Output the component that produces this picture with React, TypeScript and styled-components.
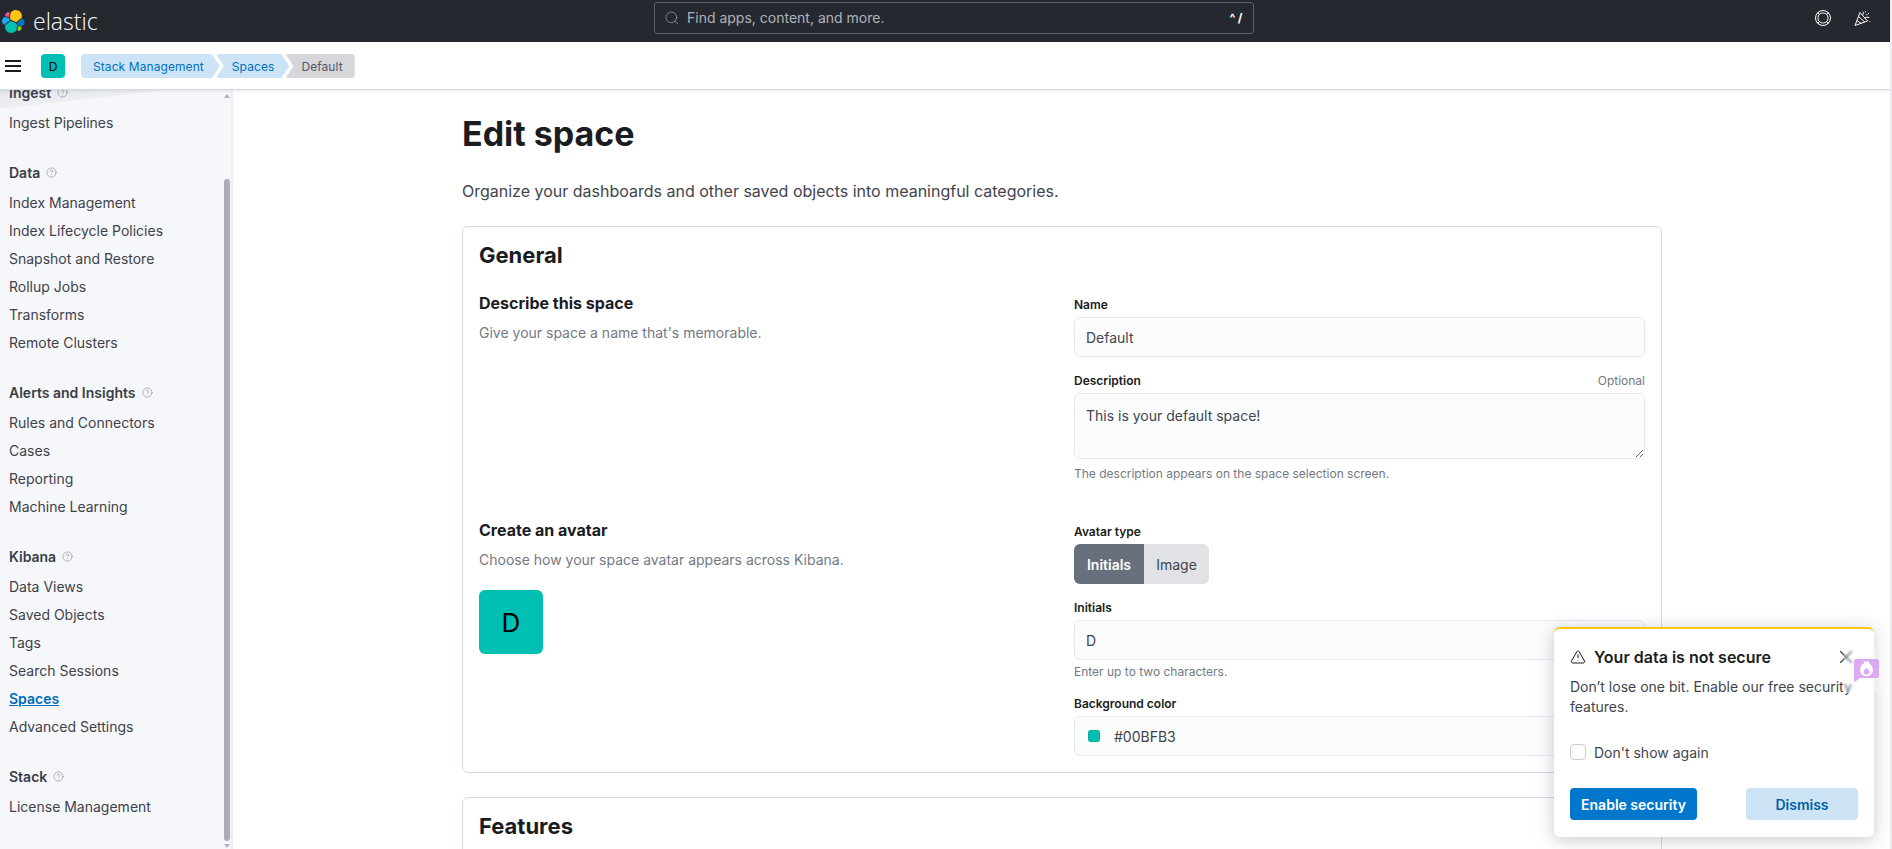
import React from "react";
import styled, { createGlobalStyle } from "styled-components";
import { CircleHelp, Search, TriangleAlert, X } from "lucide-react";

const Global = createGlobalStyle`
  html, body { margin: 0; padding: 0; height: 100%; overflow: hidden; background: #e9ebf0; }
  #root { height: 100%; }
  * { box-sizing: border-box; }
  body { font-family: Inter, "Liberation Sans", sans-serif; font-size: 14px; color: #3a3d47; }
`;

const Page = styled.div`
  position: relative;
  height: 849px;
  width: 1890px;
  background: #fff;
  display: flex;
  flex-direction: column;
  overflow: hidden;
`;

const TopBar = styled.header`
  height: 42px;
  flex: none;
  background: #25282f;
  display: grid;
  grid-template-columns: 654px 600px 1fr;
  align-items: center;
`;

const Brand = styled.div`
  display: flex;
  align-items: center;
  gap: 7px;
  padding-left: 1px;
`;

const Wordmark = styled.span`
  font-family: "Open Sans", sans-serif;
  font-size: 23px;
  font-weight: 300;
  line-height: 36px;
  color: #fff;
`;

const SearchBox = styled.div`
  height: 32px;
  margin-top: -7px;
  border: 1px solid #5c5f67;
  border-radius: 3px;
  display: flex;
  align-items: center;
  padding: 0 8px 0 9px;
  color: #a9adb5;
`;

const SearchText = styled.span`
  flex: 1;
  margin-left: 7px;
  font-size: 14px;
  color: #b0b3ba;
`;

const Shortcut = styled.span`
  font-size: 12px;
  font-weight: 700;
  color: #fff;
  letter-spacing: 2.5px;
`;

const TopIcons = styled.div`
  display: flex;
  justify-content: flex-end;
  align-items: center;
  gap: 23px;
  padding-right: 19px;
  margin-top: -6px;
  color: #fff;
`;

const SubBar = styled.div`
  position: relative;
  z-index: 2;
  height: 48px;
  flex: none;
  background: #fff;
  border-bottom: 1px solid #d3dae6;
  box-shadow: 0 1px 3px rgba(60, 70, 90, 0.12);
  display: flex;
  align-items: center;
  padding: 1px 0 0 5px;
`;

const Burger = styled.div`
  width: 16px;
  display: flex;
  flex-direction: column;
  gap: 3px;
  margin-right: 20px;
`;

const BurgerLine = styled.span`
  height: 2px;
  background: #1a1c21;
`;

const SpaceBadge = styled.div`
  width: 24px;
  height: 24px;
  border-radius: 4px;
  background: #00bfb3;
  color: #000;
  font-size: 12px;
  display: flex;
  align-items: center;
  justify-content: center;
  margin-right: 16px;
`;

const Crumbs = styled.nav`
  display: flex;
  align-items: center;
`;

const Crumb = styled.span<{ $first?: boolean; $last?: boolean }>`
  height: 24px;
  display: flex;
  align-items: center;
  font-size: 12px;
  letter-spacing: 0.08px;
  padding: ${(p) => (p.$first ? "0 16px 0 12px" : p.$last ? "0 12px 0 16px" : "0 15px 0 16px")};
  margin-left: ${(p) => (p.$first ? "0" : "-4px")};
  border-radius: 4px;
  color: ${(p) => (p.$last ? "#535966" : "#0071c2")};
  background: ${(p) => (p.$last ? "#d5d7db" : "#cce4f5")};
  clip-path: ${(p) =>
    p.$first
      ? "polygon(0 0, calc(100% - 8px) 0, 100% 50%, calc(100% - 8px) 100%, 0 100%)"
      : p.$last
      ? "polygon(0 0, 100% 0, 100% 100%, 0 100%, 8px 50%)"
      : "polygon(0 0, calc(100% - 8px) 0, 100% 50%, calc(100% - 8px) 100%, 0 100%, 8px 50%)"};
`;

const Body = styled.div`
  flex: 1;
  min-height: 0;
  display: flex;
`;

const Sidebar = styled.aside`
  width: 233px;
  flex: none;
  display: flex;
  overflow: hidden;
  border-right: 2px solid #eceef3;
  background: linear-gradient(173.6deg, #e4e7ec 0, #eceef3 18px, #f5f7fa 19px);
`;

const Nav = styled.nav`
  flex: 1;
  padding-left: 9px;
  margin-top: -7px;
`;

const NavGroup = styled.div`
  margin-bottom: 26px;
`;

const NavHeading = styled.div`
  display: flex;
  align-items: center;
  gap: 6px;
  height: 19px;
  margin-bottom: 7px;
  font-size: 14px;
  font-weight: 600;
  color: #3a3d47;
`;

const NavItem = styled.div<{ $active?: boolean }>`
  height: 28px;
  line-height: 28px;
  font-size: 14px;
  font-weight: ${(p) => (p.$active ? 600 : 400)};
  color: ${(p) => (p.$active ? "#006bb8" : "#3f424c")};
  text-decoration: ${(p) => (p.$active ? "underline" : "none")};
`;

const ScrollTrack = styled.div`
  width: 7px;
  margin-right: 1px;
  flex: none;
  display: flex;
  flex-direction: column;
  align-items: center;
  padding-top: 4px;
`;

const ArrowUp = styled.span`
  width: 0;
  height: 0;
  border-left: 3.5px solid transparent;
  border-right: 3.5px solid transparent;
  border-bottom: 4px solid #b4b7bf;
`;

const ArrowDown = styled.span`
  width: 0;
  height: 0;
  margin-top: 3px;
  border-left: 3.5px solid transparent;
  border-right: 3.5px solid transparent;
  border-top: 4px solid #b4b7bf;
`;

const Thumb = styled.div`
  width: 6px;
  height: 662px;
  margin-top: 81px;
  border-radius: 3px;
  background: #abaeb8;
`;

const Main = styled.main`
  flex: 1;
  min-width: 0;
  overflow: hidden;
  padding-top: 24px;
`;

const Content = styled.div`
  width: 1200px;
  margin-left: 229px;
`;

const Title = styled.h1`
  margin: 0;
  font-size: 34px;
  line-height: 40px;
  font-weight: 700;
  color: #1a1c21;
`;

const Lead = styled.p`
  margin: 25px 0 23px;
  font-size: 16px;
  line-height: 24px;
  color: #41444e;
`;

const Panel = styled.section`
  border: 1px solid #d3dae6;
  border-radius: 6px;
  padding: 16px;
  background: #fff;
  margin-bottom: 24px;
`;

const PanelTitle = styled.h2`
  margin: 0;
  font-size: 22px;
  line-height: 24px;
  font-weight: 700;
  color: #1a1c21;
`;

const FormGrid = styled.div`
  margin-top: 26px;
  display: grid;
  grid-template-columns: 1fr 571px;
  row-gap: 38px;
`;

const SectionTitle = styled.h3`
  margin: 0;
  font-size: 16px;
  line-height: 20px;
  font-weight: 700;
  color: #1a1c21;
`;

const SectionText = styled.p`
  margin: 10px 0 0;
  font-size: 14px;
  line-height: 20px;
  color: #737984;
`;

const BigAvatar = styled.div`
  width: 64px;
  height: 64px;
  margin-top: 20px;
  border-radius: 6px;
  background: #00bfb3;
  color: #000;
  font-size: 26px;
  display: flex;
  align-items: center;
  justify-content: center;
`;

const Fields = styled.div`
  padding-top: 4px;
  display: flex;
  flex-direction: column;
  gap: 16px;
`;

const Field = styled.div`
  display: flex;
  flex-direction: column;
`;

const LabelRow = styled.div`
  display: flex;
  justify-content: space-between;
  height: 16px;
  line-height: 16px;
  margin-bottom: 4px;
  font-size: 12px;
`;

const Label = styled.label`
  font-weight: 600;
  color: #1a1c21;
`;

const Optional = styled.span`
  color: #737984;
`;

const TextInput = styled.input`
  height: 40px;
  width: 100%;
  border: 1px solid #e6e9f0;
  border-radius: 6px;
  background: #fbfcfd;
  padding: 0 11px;
  font: 400 14px Inter, sans-serif;
  color: #41444e;
  outline: none;
`;

const TextArea = styled.textarea`
  height: 66px;
  width: 100%;
  display: block;
  border: 1px solid #e6e9f0;
  border-radius: 6px;
  background: #fbfcfd;
  padding: 11px;
  font: 400 14px/22px Inter, sans-serif;
  color: #41444e;
  outline: none;
`;

const Help = styled.div<{ $gap?: number }>`
  margin-top: ${(p) => p.$gap ?? 4}px;
  font-size: 12px;
  line-height: 16px;
  color: #737984;
`;

const Toggle = styled.div`
  display: flex;
  width: 135px;
  height: 40px;
  border-radius: 6px;
  overflow: hidden;
`;

const ToggleOption = styled.button<{ $on?: boolean }>`
  border: 0;
  padding: 0;
  width: ${(p) => (p.$on ? 70 : 65)}px;
  background: ${(p) => (p.$on ? "#69707d" : "#e0e2e6")};
  color: ${(p) => (p.$on ? "#fff" : "#41444e")};
  font: ${(p) => (p.$on ? 600 : 400)} 14px Inter, sans-serif;
`;

const ColorBox = styled.div`
  height: 40px;
  border: 1px solid #e6e9f0;
  border-radius: 6px;
  background: #fbfcfd;
  display: flex;
  align-items: center;
  gap: 14px;
  padding-left: 13px;
  color: #41444e;
`;

const Swatch = styled.span`
  width: 12px;
  height: 12px;
  border-radius: 3px;
  background: #00bfb3;
  box-shadow: inset 0 0 0 1px rgba(0, 0, 0, 0.1);
`;

const Toast = styled.aside`
  position: absolute;
  left: 1554px;
  top: 627px;
  width: 320px;
  height: 210px;
  z-index: 5;
  background: #fff;
  border-top: 2px solid #fec514;
  border-radius: 6px;
  padding: 16px;
  box-shadow: 0 2px 14px rgba(60, 70, 90, 0.22), 0 6px 30px rgba(60, 70, 90, 0.08);
`;

const ToastHead = styled.div`
  display: flex;
  align-items: center;
  gap: 8px;
  height: 24px;
`;

const ToastTitle = styled.div`
  flex: 1;
  font-size: 16px;
  font-weight: 600;
  color: #1a1c21;
`;

const CloseIcon = styled.span`
  position: absolute;
  right: 17px;
  top: 17px;
  display: flex;
  color: #343741;
`;

const ToastBody = styled.p`
  margin: 8px 0 0;
  font-size: 14px;
  line-height: 20px;
  color: #41444e;
`;

const CheckRow = styled.div`
  display: flex;
  align-items: center;
  gap: 8px;
  margin-top: 27px;
  height: 16px;
  color: #41444e;
`;

const CheckBox = styled.span`
  width: 16px;
  height: 16px;
  border: 1px solid #c9cdd5;
  border-radius: 4px;
  background: #fff;
`;

const ToastActions = styled.div`
  margin-top: 28px;
  display: flex;
  justify-content: space-between;
`;

const ToastButton = styled.button<{ $primary?: boolean }>`
  height: 32px;
  width: ${(p) => (p.$primary ? 127 : 112)}px;
  border: 0;
  border-radius: 4px;
  background: ${(p) => (p.$primary ? "#0077cc" : "#cce4f5")};
  color: ${(p) => (p.$primary ? "#fff" : "#0061a6")};
  font: 600 14px Inter, sans-serif;
`;

const FloatBadge = styled.div`
  position: absolute;
  z-index: 6;
  left: 1844px;
  top: 647px;
  width: 46px;
  height: 46px;
  background: rgba(255, 255, 255, 0.2);
  backdrop-filter: blur(0.8px);
  display: flex;
  padding: 12px 0 0 10px;
`;

const ElasticLogo = () => (
  <svg width="25" height="25" viewBox="0 0 32 32" aria-hidden="true">
    <path fill="#FEC514" d="M12.58 13.73l7 3.19 7.06-6.18c.1-.51.15-1.01.15-1.55 0-4.35-3.54-7.89-7.9-7.89-2.6 0-5.03 1.28-6.5 3.44l-1.17 6.09 1.36 2.9z" />
    <path fill="#00BFB3" d="M5.34 21.16c-.1.52-.15 1.05-.15 1.59 0 4.37 3.56 7.93 7.93 7.93 2.63 0 5.07-1.3 6.54-3.47l1.17-6.08-1.56-2.98-7.03-3.2-6.9 6.21z" />
    <path fill="#F04E98" d="M5.3 9.12l4.82 1.14 1.05-5.49a3.47 3.47 0 00-5.33 1.72c-.3.84-.33 1.77-.54 2.63z" />
    <path fill="#1BA9F5" d="M4.88 10.27c-2.15.71-3.64 2.77-3.64 5.04 0 2.21 1.37 4.18 3.42 4.96l6.75-6.1-1.24-2.65-5.29-1.25z" />
    <path fill="#93C90E" d="M20.76 27.21a3.46 3.46 0 005.33-1.71 3.46 3.46 0 00.14-2.64l-4.42-1.12-1.05 5.47z" />
    <path fill="#0077CC" d="M21.66 20.95l5.01 1.17c2.15-.71 3.64-2.77 3.64-5.04a5.36 5.36 0 00-3.4-4.96l-6.56 5.74 1.31 3.09z" />
  </svg>
);

const HelpRing = () => (
  <svg width="16" height="16" viewBox="0 0 16 16" fill="none" stroke="currentColor" strokeWidth="1" aria-hidden="true">
    <circle cx="8" cy="8" r="7.5" />
    <rect x="3" y="3" width="10" height="10" rx="4.6" />
    <path d="M2.7 2.7l2 2M13.3 2.7l-2 2M2.7 13.3l2-2M13.3 13.3l-2-2" />
    <path d="M4.4 1.6l-2.8 2.8M11.6 1.6l2.8 2.8M4.4 14.4l-2.8-2.8M11.6 14.4l2.8-2.8" strokeWidth="0.7" />
  </svg>
);

const Cheer = () => (
  <svg width="17" height="17" viewBox="0 0 17 17" fill="none" stroke="currentColor" strokeWidth="1" aria-hidden="true">
    <path d="M1 15.5L6 2.5l7.5 8.5z" strokeLinejoin="round" />
    <path d="M3 10.5l4.6 3.2M4.6 6.6l6 5.2" />
    <path d="M8.5 5.5c.8-1.2 1-2.4.6-3.8M10.5 8c1.4-.8 3-1 4.8-.4" />
    <path d="M11.5 1.5v1M14 3.5h1M12.5 5.2l.8-.8M15.8 11v.8M12 1" strokeWidth="1.1" />
  </svg>
);

const FlameBubble = () => (
  <svg width="25" height="24" viewBox="0 0 25 24" aria-hidden="true">
    <path fill="#dcaaf0" d="M2 0h21a2 2 0 012 2v15a2 2 0 01-2 2H6l-6 4.5V2a2 2 0 012-2z" />
    <path
      fill="#fff"
      fillRule="evenodd"
      d="M9.5 2c1.2 2.5-.4 4-1.2 3C6.8 7 6 9 6 11c0 3.4 2.8 6.2 6.5 6.2S19 14.4 19 11c0-3.8-3.4-5.2-4.4-9-.9 1-3.3 1-5.1 0zM12.5 8.6c.7 1.8 2.9 2.4 2.9 4.4 0 1.5-1.3 2.6-2.9 2.6S9.6 14.500 9.600 13c0-2 2.200-2.600 2.900-4.400z"
    />
  </svg>
);

const groups: { title: string; items: string[] }[] = [
  { title: "Ingest", items: ["Ingest Pipelines"] },
  { title: "Data", items: ["Index Management", "Index Lifecycle Policies", "Snapshot and Restore", "Rollup Jobs", "Transforms", "Remote Clusters"] },
  { title: "Alerts and Insights", items: ["Rules and Connectors", "Cases", "Reporting", "Machine Learning"] },
  { title: "Kibana", items: ["Data Views", "Saved Objects", "Tags", "Search Sessions", "Spaces", "Advanced Settings"] },
  { title: "Stack", items: ["License Management"] },
];

export default function App() {
  return (
    <Page>
      <Global />
      <TopBar>
        <Brand>
          <ElasticLogo />
          <Wordmark>elastic</Wordmark>
        </Brand>
        <SearchBox>
          <Search size={16} strokeWidth={1} />
          <SearchText>Find apps, content, and more.</SearchText>
          <Shortcut>^/</Shortcut>
        </SearchBox>
        <TopIcons>
          <HelpRing />
          <Cheer />
        </TopIcons>
      </TopBar>
      <SubBar>
        <Burger>
          <BurgerLine />
          <BurgerLine />
          <BurgerLine />
        </Burger>
        <SpaceBadge>D</SpaceBadge>
        <Crumbs>
          <Crumb $first>Stack Management</Crumb>
          <Crumb>Spaces</Crumb>
          <Crumb $last>Default</Crumb>
        </Crumbs>
      </SubBar>
      <Body>
        <Sidebar>
          <Nav>
            {groups.map((g) => (
              <NavGroup key={g.title}>
                <NavHeading>
                  {g.title}
                  <CircleHelp size={11} strokeWidth={1.5} color="#8f95a0" />
                </NavHeading>
                {g.items.map((i) => (
                  <NavItem key={i} $active={i === "Spaces"}>
                    {i}
                  </NavItem>
                ))}
              </NavGroup>
            ))}
          </Nav>
          <ScrollTrack>
            <ArrowUp />
            <Thumb />
            <ArrowDown />
          </ScrollTrack>
        </Sidebar>
        <Main>
          <Content>
            <Title>Edit space</Title>
            <Lead>Organize your dashboards and other saved objects into meaningful categories.</Lead>
            <Panel>
              <PanelTitle>General</PanelTitle>
              <FormGrid>
                <div>
                  <SectionTitle>Describe this space</SectionTitle>
                  <SectionText>Give your space a name that's memorable.</SectionText>
                </div>
                <Fields>
                  <Field>
                    <LabelRow>
                      <Label>Name</Label>
                    </LabelRow>
                    <TextInput readOnly value="Default" />
                  </Field>
                  <Field>
                    <LabelRow>
                      <Label>Description</Label>
                      <Optional>Optional</Optional>
                    </LabelRow>
                    <TextArea readOnly value="This is your default space!" />
                    <Help $gap={7}>The description appears on the space selection screen.</Help>
                  </Field>
                </Fields>
                <div>
                  <SectionTitle>Create an avatar</SectionTitle>
                  <SectionText>Choose how your space avatar appears across Kibana.</SectionText>
                  <BigAvatar>D</BigAvatar>
                </div>
                <Fields>
                  <Field>
                    <LabelRow>
                      <Label>Avatar type</Label>
                    </LabelRow>
                    <Toggle>
                      <ToggleOption $on>Initials</ToggleOption>
                      <ToggleOption>Image</ToggleOption>
                    </Toggle>
                  </Field>
                  <Field>
                    <LabelRow>
                      <Label>Initials</Label>
                    </LabelRow>
                    <TextInput readOnly value="D" />
                    <Help>Enter up to two characters.</Help>
                  </Field>
                  <Field>
                    <LabelRow>
                      <Label>Background color</Label>
                    </LabelRow>
                    <ColorBox>
                      <Swatch />
                      #00BFB3
                    </ColorBox>
                  </Field>
                </Fields>
              </FormGrid>
            </Panel>
            <Panel>
              <PanelTitle>Features</PanelTitle>
            </Panel>
          </Content>
        </Main>
      </Body>
      <Toast>
        <ToastHead>
          <TriangleAlert size={16} strokeWidth={1.5} color="#1a1c21" />
          <ToastTitle>Your data is not secure</ToastTitle>
        </ToastHead>
        <CloseIcon>
          <X size={22} strokeWidth={1.2} />
        </CloseIcon>
        <ToastBody>Don’t lose one bit. Enable our free security features.</ToastBody>
        <CheckRow>
          <CheckBox />
          Don't show again
        </CheckRow>
        <ToastActions>
          <ToastButton $primary>Enable security</ToastButton>
          <ToastButton>Dismiss</ToastButton>
        </ToastActions>
      </Toast>
      <FloatBadge>
        <FlameBubble />
      </FloatBadge>
    </Page>
  );
}
